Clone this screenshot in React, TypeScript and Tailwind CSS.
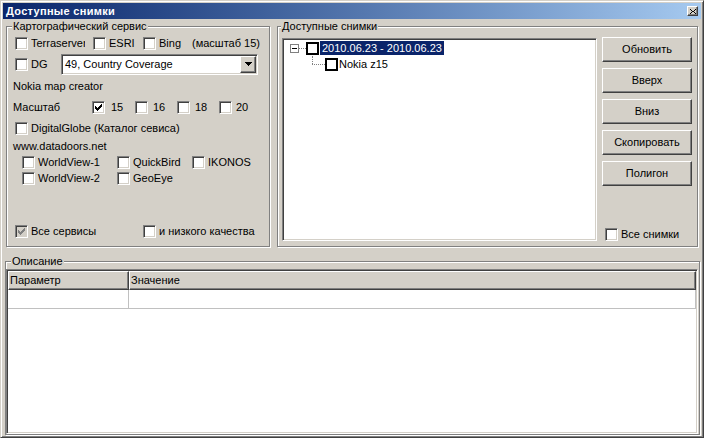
import type { ReactNode } from "react";

// Classic Windows 2000 dialog look: grey face, bevelled edges, etched group frames.
const sunken =
  "border border-t-[#808080] border-l-[#808080] border-r-white border-b-white shadow-[inset_1px_1px_0_#404040,inset_-1px_-1px_0_#d4d0c8]";
const raised =
  "border border-t-white border-l-white border-r-[#404040] border-b-[#404040] shadow-[inset_-1px_-1px_0_#808080]";

const CHECK_PATH =
  "M0 2h1v3H0z M1 3h1v3H1z M2 4h1v3H2z M3 3h1v3H3z M4 2h1v3H4z M5 1h1v3H5z M6 0h1v3H6z";

function Check({
  label,
  checked = false,
  disabled = false,
  labelClass = "ml-[3px]",
}: {
  label?: ReactNode;
  checked?: boolean;
  disabled?: boolean;
  labelClass?: string;
}) {
  return (
    <div className="flex items-center">
      <span
        className={`flex h-[13px] w-[13px] shrink-0 items-center justify-center ${sunken} ${
          disabled ? "bg-[#d4d0c8]" : "bg-white"
        }`}
      >
        {checked && (
          <svg width="7" height="7" viewBox="0 0 7 7" shapeRendering="crispEdges">
            <path d={CHECK_PATH} fill={disabled ? "#808080" : "#000"} />
          </svg>
        )}
      </span>
      {label && <span className={`whitespace-nowrap ${labelClass}`}>{label}</span>}
    </div>
  );
}

function Group({
  title,
  labelLeft,
  className,
  children,
}: {
  title: string;
  labelLeft: string;
  className: string;
  children: ReactNode;
}) {
  return (
    <div
      className={`relative border border-[#808080] shadow-[1px_1px_0_#fff,inset_1px_1px_0_#fff] ${className}`}
    >
      <span className={`absolute -top-[7px] bg-[#d4d0c8] px-[1px] leading-[13px] ${labelLeft}`}>
        {title}
      </span>
      {children}
    </div>
  );
}

function Btn({ children }: { children: ReactNode }) {
  return (
    <button
      type="button"
      className={`flex h-[25px] w-[90px] items-center justify-center bg-[#d4d0c8] ${raised}`}
    >
      {children}
    </button>
  );
}

function Services() {
  return (
    <Group title="Картографический сервис" labelLeft="left-[5px]" className="h-[221px] w-[264px]">
      <div className="flex flex-col pl-[8px] pt-[6px]">
        <div className="flex h-[20px] items-center">
          <div className="w-[78px]">
            {/* the label is cut by its control width in the original dialog */}
            <Check label="Terraserver" labelClass="ml-[3px] w-[54px] overflow-hidden" />
          </div>
          <div className="w-[50px]">
            <Check label="ESRI" />
          </div>
          <div className="w-[49px]">
            <Check label="Bing" />
          </div>
          <span>(масштаб 15)</span>
        </div>

        <div className="flex h-[22px] items-center">
          <div className="w-[46px]">
            <Check label="DG" />
          </div>
          <div className={`flex h-[21px] w-[197px] items-center bg-white p-[1px] ${sunken}`}>
            <span className="flex-1 pl-[2px]">49, Country Coverage</span>
            <span className={`flex h-[17px] w-[16px] items-center justify-center bg-[#d4d0c8] ${raised}`}>
              <svg width="7" height="4" viewBox="0 0 7 4" shapeRendering="crispEdges">
                <path d="M0 0h7v1H0z M1 1h5v1H1z M2 2h3v1H2z M3 3h1v1H3z" fill="#000" />
              </svg>
            </span>
          </div>
        </div>

        <div className="-ml-[2px] flex h-[22px] items-center">Nokia map creator</div>

        <div className="flex h-[21px] items-center">
          <span className="-ml-[2px] w-[79px]">Масштаб</span>
          <div className="w-[43px]">
            <Check label="15" checked labelClass="ml-[6px]" />
          </div>
          <div className="w-[42px]">
            <Check label="16" labelClass="ml-[5px]" />
          </div>
          <div className="w-[42px]">
            <Check label="18" labelClass="ml-[5px]" />
          </div>
          <Check label="20" labelClass="ml-[4px]" />
        </div>

        <div className="flex h-[20px] items-center">
          <Check label="DigitalGlobe (Каталог севиса)" />
        </div>

        <div className="-ml-[2px] flex h-[17px] items-center">www.datadoors.net</div>

        <div className="flex h-[15px] items-center pl-[7px]">
          <div className="w-[95px]">
            <Check label="WorldView-1" />
          </div>
          <div className="w-[75px]">
            <Check label="QuickBird" />
          </div>
          <Check label="IKONOS" />
        </div>
        <div className="flex h-[16px] items-center pl-[7px]">
          <div className="w-[95px]">
            <Check label="WorldView-2" />
          </div>
          <Check label="GeoEye" />
        </div>

        <div className="mt-[36px] flex h-[18px] items-center">
          <div className="w-[128px]">
            <Check label="Все сервисы" checked disabled />
          </div>
          <Check label="и низкого качества" />
        </div>
      </div>
    </Group>
  );
}

function Snapshots() {
  return (
    <Group title="Доступные снимки" labelLeft="left-[3px]" className="h-[221px] w-[421px]">
      <div className="flex items-start pl-[4px] pt-[11px]">
        <div className={`h-[203px] w-[315px] bg-white p-[1px] ${sunken}`}>
          <div className="flex h-[16px] items-center pl-[6px]">
            <span className="flex h-[9px] w-[9px] items-center justify-center border border-[#808080] bg-white">
              <span className="h-[1px] w-[5px] bg-black" />
            </span>
            <span className="w-[7px] border-t border-dotted border-[#808080]" />
            <span className="h-[13px] w-[13px] border-2 border-black bg-white" />
            <span className="ml-[1px] bg-[#0a246a] px-[2px] leading-[14px] text-white">
              2010.06.23 - 2010.06.23
            </span>
          </div>
          <div className="flex h-[16px] items-center pl-[28px]">
            <span className="flex w-[13px] flex-col self-stretch">
              <span className="h-[8px] border-l border-dotted border-[#808080]" />
              <span className="border-t border-dotted border-[#808080]" />
            </span>
            <span className="h-[13px] w-[13px] border-2 border-black bg-white" />
            <span className="ml-[1px]">Nokia z15</span>
          </div>
        </div>

        <div className="-mt-[1px] ml-[5px] flex h-[206px] flex-col gap-[6px]">
          <Btn>Обновить</Btn>
          <Btn>Вверх</Btn>
          <Btn>Вниз</Btn>
          <Btn>Скопировать</Btn>
          <Btn>Полигон</Btn>
          <div className="mt-auto flex h-[18px] items-center pl-[3px]">
            <Check label="Все снимки" />
          </div>
        </div>
      </div>
    </Group>
  );
}

function Description() {
  return (
    <Group title="Описание" labelLeft="left-[5px]" className="-ml-[1px] h-[174px] w-[695px]">
      <div className="pt-[7px]">
        <div className={`flex h-[165px] w-[692px] flex-col bg-white p-[1px] ${sunken}`}>
          <div className="flex h-[19px] bg-[#d4d0c8]">
            <div className={`flex w-[121px] items-center px-[1px] ${raised}`}>Параметр</div>
            <div className={`flex w-[567px] items-center px-[1px] ${raised}`}>Значение</div>
          </div>
          <div className="flex h-[19px]">
            <div className="w-[121px] border-r border-b border-[#c0c0c0]" />
            <div className="w-[567px] border-r border-b border-[#c0c0c0]" />
          </div>
        </div>
      </div>
    </Group>
  );
}

export default function App() {
  return (
    <div className="h-[438px] w-[704px] overflow-hidden font-['Liberation_Sans',Arial,sans-serif] text-[11px] leading-[13px] text-black">
      <div className="flex h-full flex-col border border-t-[#d4d0c8] border-l-[#d4d0c8] border-r-[#404040] border-b-[#404040] bg-[#d4d0c8] px-[2px] pt-[2px] pb-[2px] shadow-[inset_1px_1px_0_#fff,inset_-1px_-1px_0_#808080]">
        <div className="flex h-[16px] shrink-0 items-center justify-between bg-linear-to-r from-[#0a246a] to-[#a6caf0] pl-[3px] pr-[3px]">
          <span className="text-[11px] font-bold tracking-[0.3px] text-white">Доступные снимки</span>
          <span className={`flex h-[10px] w-[11px] items-center justify-center bg-[#d4d0c8] ${raised}`}>
            <svg width="6" height="5" viewBox="0 0 6 5" shapeRendering="crispEdges">
              <path d="M0 0h1v1H0z M5 0h1v1H5z M1 1h1v1H1z M4 1h1v1H4z M2 2h2v1H2z M1 3h1v1H1z M4 3h1v1H4z M0 4h1v1H0z M5 4h1v1H5z" fill="#000" />
            </svg>
          </span>
        </div>

        <div className="flex flex-col pl-[3px] pt-[7px]">
          <div className="flex gap-[7px]">
            <Services />
            <Snapshots />
          </div>
          <div className="mt-[14px]">
            <Description />
          </div>
        </div>
      </div>
    </div>
  );
}
